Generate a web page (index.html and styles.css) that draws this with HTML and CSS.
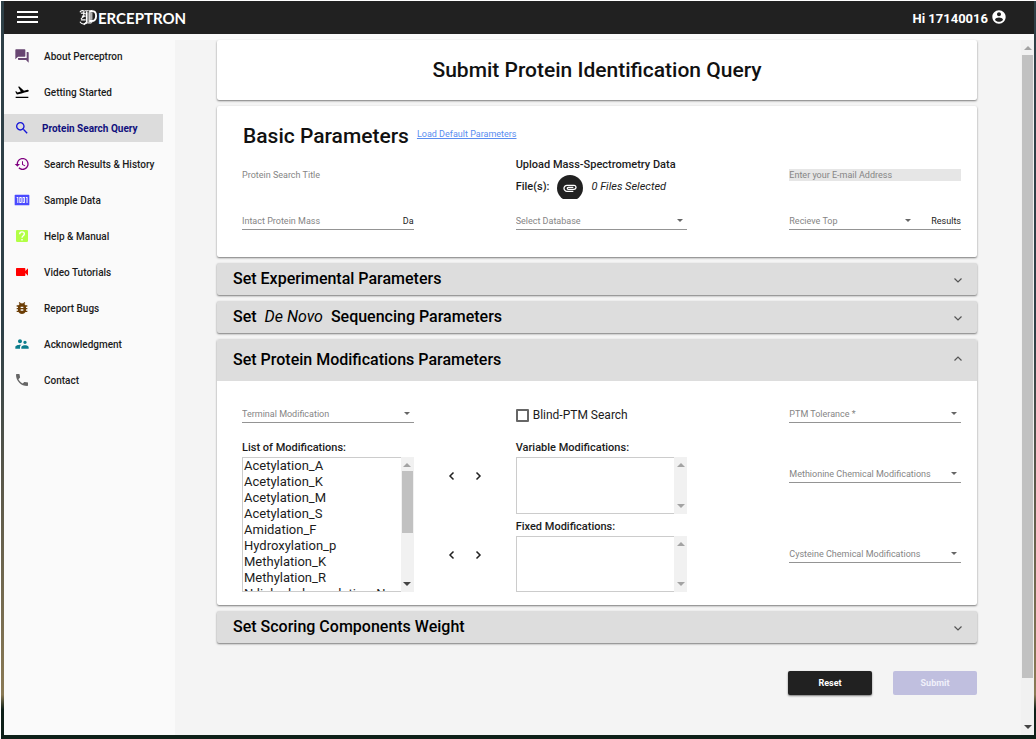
FILE: index.html
```html
<!DOCTYPE html>
<html lang="en">
<head>
<meta charset="utf-8">
<title>Perceptron</title>
<link rel="stylesheet" href="styles.css">
</head>
<body>
<div class="app">
  <header class="topbar">
    <button class="menu" aria-label="Menu"><span></span><span></span><span></span></button>
    <a class="brand" href="#" aria-label="Perceptron">
      <svg class="brand-mark" viewBox="0 0 20 17" aria-hidden="true">
        <g fill="none" stroke="currentColor">
          <path stroke-width="1.2" d="M1 3C2 1 4 1 6 2M2 4c2 0 4-1 5 1M1 13c2 3 5 3 7 1M2 11h5M3 7h4M5 2.500v5L2 10"/>
          <path stroke-width="1.5" d="M8 2v11.500L5 16M11.500 2v12"/>
          <path stroke-width="1" d="M9.500 3v11M6 1.500c3-1 5 1 8-.5"/>
          <path stroke-width="2" d="M11 2c6-1 7 1 7 5s-2 6-7 5"/>
          <path stroke-width="1" d="M13.500 3v8M7 14.500c3-1 5 1 7-1"/>
        </g>
      </svg>
      <span class="brand-name">ERCEPTRON</span>
    </a>
    <button class="user">Hi 17140016
      <svg viewBox="0 0 24 24" aria-hidden="true"><path d="M12 2C6.480 2 2 6.480 2 12s4.480 10 10 10 10-4.480 10-10S17.520 2 12 2zm0 3c1.660 0 3 1.340 3 3s-1.340 3-3 3-3-1.340-3-3 1.340-3 3-3zm0 14.200c-2.500 0-4.710-1.280-6-3.220.030-1.990 4-3.080 6-3.080 1.990 0 5.970 1.090 6 3.080-1.290 1.940-3.500 3.220-6 3.220z"/></svg>
    </button>
  </header>
  <div class="workspace">
    <nav class="sidebar">
      <a href="#" class="nav-item"><svg class="c-about" viewBox="0 0 24 24"><path d="M21 6h-2v9H6v2c0 .55.45 1 1 1h11l4 4V7c0-.55-.45-1-1-1zm-4 6V3c0-.55-.45-1-1-1H3c-.55 0-1 .45-1 1v14l4-4h10c.55 0 1-.45 1-1z"/></svg><span>About Perceptron</span></a>
      <a href="#" class="nav-item"><svg class="c-start" viewBox="0 0 24 24"><path d="M2.500 19h19v2h-19zm19.570-9.360c-.21-.8-1.040-1.280-1.840-1.060L14.920 10l-6.900-6.430-1.930.51 4.140 7.170-4.970 1.330-1.970-1.540-1.450.39 1.820 3.160.77 1.330 1.600-.43 5.310-1.420 4.350-1.160L21 11.490c.81-.23 1.280-1.050 1.070-1.850z"/></svg><span>Getting Started</span></a>
      <a href="#" class="nav-item active" aria-current="page"><svg class="c-search" viewBox="0 0 24 24"><path d="M15.500 14h-.79l-.28-.27C15.410 12.590 16 11.110 16 9.500 16 5.910 13.090 3 9.500 3S3 5.910 3 9.500 5.910 16 9.500 16c1.610 0 3.090-.59 4.230-1.570l.27.28v.79l5 4.990L20.490 19l-4.990-5zm-6 0C7.010 14 5 11.990 5 9.500S7.010 5 9.500 5 14 7.010 14 9.500 11.990 14 9.500 14z"/></svg><span>Protein Search Query</span></a>
      <a href="#" class="nav-item"><svg class="c-history" viewBox="0 0 24 24"><path d="M13 3c-4.970 0-9 4.030-9 9H1l3.890 3.890.07.14L9 12H6c0-3.870 3.130-7 7-7s7 3.130 7 7-3.130 7-7 7c-1.930 0-3.680-.79-4.940-2.060l-1.420 1.420C8.270 19.990 10.510 21 13 21c4.970 0 9-4.030 9-9s-4.030-9-9-9zm-1 5v5l4.280 2.540.72-1.210-3.500-2.080V8H12z"/></svg><span>Search Results &amp; History</span></a>
      <a href="#" class="nav-item"><svg class="c-sample" viewBox="0 0 24 24"><path fill-rule="evenodd" d="M2 4h20q1 0 1 1v14q0 1-1 1H2q-1 0-1-1V5q0-1 1-1zM4 7.500V9h1v7.500h1.500v-9zM8 7.500v9h3.500v-9zm1.300 1.500h.9v6h-.9zM12.800 7.500v9h3.500v-9zm1.300 1.500h.9v6h-.9zM17.800 7.500V9h1v7.500h1.500v-9z"/></svg><span>Sample Data</span></a>
      <a href="#" class="nav-item"><svg class="c-help" viewBox="0 0 24 24"><rect x="3" y="3" width="18" height="18" rx="2"/><path fill="none" stroke="#fff" stroke-width="2" d="M8.500 9.500C8.500 4.500 15.500 5 15.500 9c0 2.500-3.500 2.800-3.500 5.500M12 16.500v2.200"/></svg><span>Help &amp; Manual</span></a>
      <a href="#" class="nav-item"><svg class="c-video" viewBox="0 0 24 24"><path d="M17 10.500V7c0-.55-.45-1-1-1H4c-.55 0-1 .45-1 1v10c0 .55.45 1 1 1h12c.55 0 1-.45 1-1v-3.500l4 4v-11l-4 4z"/></svg><span>Video Tutorials</span></a>
      <a href="#" class="nav-item"><svg class="c-bug" viewBox="0 0 24 24"><path d="M20 8h-2.810c-.45-.78-1.070-1.450-1.820-1.960L17 4.410 15.590 3l-2.170 2.170C12.960 5.060 12.490 5 12 5c-.49 0-.96.06-1.410.17L8.410 3 7 4.410l1.620 1.630C7.880 6.550 7.260 7.220 6.810 8H4v2h2.090c-.05.33-.09.66-.09 1v1H4v2h2v1c0 .34.04.67.09 1H4v2h2.810c1.040 1.790 2.970 3 5.190 3s4.150-1.210 5.190-3H20v-2h-2.090c.05-.33.09-.66.09-1v-1h2v-2h-2v-1c0-.34-.04-.67-.09-1H20V8zm-6 8h-4v-2h4v2zm0-4h-4v-2h4v2z"/></svg><span>Report Bugs</span></a>
      <a href="#" class="nav-item"><svg class="c-ack" viewBox="0 0 24 24"><path d="M16.500 12c1.380 0 2.490-1.120 2.490-2.500S17.880 7 16.500 7C15.120 7 14 8.120 14 9.500s1.120 2.500 2.500 2.500zM9 11c1.660 0 2.990-1.340 2.990-3S10.660 5 9 5C7.340 5 6 6.340 6 8s1.340 3 3 3zm7.500 3c-1.830 0-5.500.92-5.500 2.750V19h11v-2.250c0-1.830-3.670-2.750-5.500-2.750zM9 13c-2.330 0-7 1.170-7 3.500V19h7v-2.250c0-.85.33-2.340 2.370-3.470C10.500 13.100 9.660 13 9 13z"/></svg><span>Acknowledgment</span></a>
      <a href="#" class="nav-item"><svg class="c-phone" viewBox="0 0 24 24"><path d="M6.620 10.790c1.440 2.830 3.760 5.140 6.590 6.590l2.200-2.200c.27-.27.67-.36 1.020-.24 1.120.37 2.330.57 3.570.57.55 0 1 .45 1 1V20c0 .55-.45 1-1 1-9.390 0-17-7.610-17-17 0-.55.45-1 1-1h3.500c.55 0 1 .45 1 1 0 1.250.2 2.450.57 3.570.11.35.03.74-.25 1.020l-2.200 2.200z"/></svg><span>Contact</span></a>
    </nav>

    <main class="content">
      <h1 class="card page-title">Submit Protein Identification Query</h1>

      <section class="card basic">
        <div class="basic-head"><h2>Basic Parameters</h2><a href="#">Load Default Parameters</a></div>
        <div class="columns basic-top">
          <input class="field plain" type="text" placeholder="Protein Search Title" aria-label="Protein Search Title">
          <div class="upload">
            <span>Upload Mass-Spectrometry Data</span>
            <div class="upload-files">
              <span>File(s):</span>
              <button class="attach" aria-label="Attach files"><svg viewBox="0 0 24 24"><path d="M2 12.500C2 9.460 4.460 7 7.500 7H18c2.210 0 4 1.790 4 4s-1.790 4-4 4H9.500C8.120 15 7 13.880 7 12.500S8.120 10 9.500 10H17v2H9.410c-.55 0-.55 1 0 1H18c1.100 0 2-.9 2-2s-.9-2-2-2H7.500C5.570 9 4 10.570 4 12.500S5.570 16 7.500 16H17v2H7.500C4.460 18 2 15.540 2 12.500z"/></svg></button>
              <em>0 Files Selected</em>
            </div>
          </div>
          <input class="field plain email" type="email" placeholder="Enter your E-mail Address" aria-label="E-mail Address">
        </div>
        <div class="columns">
          <div class="line"><input class="field" type="text" placeholder="Intact Protein Mass" aria-label="Intact Protein Mass"><span class="unit">Da</span></div>
          <div class="line"><select class="field" aria-label="Database"><option>Select Database</option></select></div>
          <div class="line"><select class="field" aria-label="Number of results"><option>Recieve Top</option></select><span class="unit far">Results</span></div>
        </div>
      </section>

      <button class="card panel-head" aria-expanded="false"><span>Set Experimental Parameters</span><svg viewBox="0 0 10 10"><path d="M1.500 4.500 5 8 8.500 4.500"/></svg></button>
      <button class="card panel-head" aria-expanded="false"><span>Set &nbsp;<i>De Novo</i>&nbsp; Sequencing Parameters</span><svg viewBox="0 0 10 10"><path d="M1.500 4.500 5 8 8.500 4.500"/></svg></button>

      <section class="card">
        <button class="panel-head open" aria-expanded="true"><span>Set Protein Modifications Parameters</span><svg viewBox="0 0 10 10"><path d="M1.500 5.500 5 2 8.500 5.500"/></svg></button>
        <div class="mods">
          <div class="columns">
            <div class="line"><select class="field" aria-label="Terminal Modification"><option>Terminal Modification</option></select></div>
            <label class="check"><input type="checkbox"><span>Blind-PTM Search</span></label>
            <div class="line"><select class="field" aria-label="PTM Tolerance"><option>PTM Tolerance *</option></select></div>
          </div>
          <div class="mods-body">
            <div class="listing">
              <label for="mods-all">List of Modifications:</label>
              <div class="listbox tall">
                <select id="mods-all" multiple>
                  <option>Acetylation_A</option><option>Acetylation_K</option><option>Acetylation_M</option><option>Acetylation_S</option><option>Amidation_F</option><option>Hydroxylation_p</option><option>Methylation_K</option><option>Methylation_R</option><option>N-linked-glycosylation_N</option>
                </select>
                <div class="scroll" aria-hidden="true"><i class="up"></i><b></b><i class="down dark"></i></div>
              </div>
            </div>
            <div class="movers">
              <div><button aria-label="Remove variable"><svg viewBox="0 0 10 10"><path d="M6.500 1.500 3 5l3.500 3.500"/></svg></button><button aria-label="Add variable"><svg viewBox="0 0 10 10"><path d="M3.500 1.500 7 5 3.500 8.500"/></svg></button></div>
              <div><button aria-label="Remove fixed"><svg viewBox="0 0 10 10"><path d="M6.500 1.500 3 5l3.500 3.500"/></svg></button><button aria-label="Add fixed"><svg viewBox="0 0 10 10"><path d="M3.500 1.500 7 5 3.500 8.500"/></svg></button></div>
            </div>
            <div class="listing">
              <label for="mods-var">Variable Modifications:</label>
              <div class="listbox"><select id="mods-var" multiple></select><div class="scroll" aria-hidden="true"><i class="up"></i><i class="down"></i></div></div>
              <label for="mods-fix">Fixed Modifications:</label>
              <div class="listbox"><select id="mods-fix" multiple></select><div class="scroll" aria-hidden="true"><i class="up"></i><i class="down"></i></div></div>
            </div>
            <div class="chemical">
              <div class="line"><select class="field" aria-label="Methionine Chemical Modifications"><option>Methionine Chemical Modifications</option></select></div>
              <div class="line"><select class="field" aria-label="Cysteine Chemical Modifications"><option>Cysteine Chemical Modifications</option></select></div>
            </div>
          </div>
        </div>
      </section>

      <button class="card panel-head" aria-expanded="false"><span>Set Scoring Components Weight</span><svg viewBox="0 0 10 10"><path d="M1.500 4.500 5 8 8.500 4.500"/></svg></button>

      <div class="actions"><button class="action">Reset</button><button class="action submit" disabled>Submit</button></div>
    </main>
    <div class="scroll page-scroll" aria-hidden="true"><i class="up"></i><b></b><i class="down dark"></i></div>
  </div>
</div>
</body>
</html>
```
FILE: styles.css
```css
* { box-sizing: border-box; }
body {
  margin: 0;
  height: 100vh;
  border-top: 1px solid #fff;
  border-left: 1px solid #fff;
  padding: 0 2px 4px 3px;
  background: linear-gradient(#2e4047 0 45%, #5a584a 65%, #8a7a55 94%, #0e2018 96%);
  font-family: Roboto, "Liberation Sans", sans-serif;
  color: #1c1c1c;
}
button, input, select { font-family: inherit; color: inherit; }
button { border: 0; padding: 0; background: none; }
h1, h2 { margin: 0; font-weight: 500; color: #111; }
svg { display: block; fill: currentColor; }

.app { height: 100%; display: flex; flex-direction: column; background: #fafafa; }
.topbar {
  flex: none;
  height: 33px;
  display: flex;
  align-items: center;
  padding: 0 27px 0 13px;
  background: #212121;
  color: #fff;
}
.menu { display: grid; gap: 3px; width: 21px; margin-right: 41px; padding-bottom: 2px; }
.menu span { height: 2px; background: #fff; }
.brand { display: flex; align-items: center; color: #fff; text-decoration: none; }
.brand-mark { width: 19px; height: 17px; }
.brand-name { font: 700 15px Lato, sans-serif; }
.user { margin-left: auto; display: flex; align-items: center; gap: 3px; font-size: 13px; font-weight: 700; line-height: 20px; padding-top: 3px; }
.user svg { width: 16px; height: 16px; margin-bottom: 4px; }

.workspace { flex: 1; min-height: 0; display: flex; }
.sidebar { flex: none; width: 171px; display: flex; flex-direction: column; gap: 8px; padding: 8px 12px 0 0; }
.nav-item {
  height: 28px;
  display: flex;
  align-items: center;
  gap: 14px;
  padding-left: 10px;
  color: #1c1c1c;
  font-size: 10px;
  font-weight: 500;
  text-decoration: none;
}
.nav-item svg { width: 16px; height: 16px; }
.active { gap: 12px; background: #dcdcdc; color: #10107c; font-weight: 700; }
.c-about { color: #684672; }
.c-start { color: #000; }
.c-search { color: #1515d8; }
.c-history { color: #800080; }
.c-sample { color: #4a4aff; }
.c-help { color: #b2ff45; }
.c-video { color: #f00; }
.c-bug { color: #6b3d05; }
.c-ack { color: #0b7d8c; }
.c-phone { color: #666; }

.content {
  flex: 1;
  display: flex;
  flex-direction: column;
  gap: 6px;
  margin-top: 6px;
  padding: 0 44px 0 42px;
  background: #f4f4f4;
}
.card { border-radius: 2px; background: #fff; box-shadow: 0 1px 2px rgba(0, 0, 0, .5); }
.page-title { height: 60px; display: grid; place-items: center; font-size: 21px; }

.basic { height: 151px; }
.basic-head { display: flex; align-items: center; gap: 8px; height: 47px; padding: 13px 0 0 26px; }
.basic-head h2 { font-size: 21px; }
.basic-head a { color: #5a8df0; font-size: 9px; line-height: 14px; padding-bottom: 5px; }
.columns { display: grid; grid-template-columns: repeat(3, 1fr); column-gap: 102px; padding: 0 16px 0 25px; }
.basic-top { height: 59px; }
.field {
  flex: 1;
  min-width: 0;
  width: 100%;
  height: 17px;
  border: 0;
  padding: 0;
  background: transparent;
  color: #858585;
  font-size: 9px;
  line-height: 16px;
}
.field::placeholder { color: #858585; opacity: 1; }
select.field { appearance: none; }
.line { display: flex; border-bottom: 1px solid #949494; }
.line:has(select)::after {
  content: "";
  order: 1;
  align-self: center;
  margin-right: 4px;
  border: 3px solid transparent;
  border-top-color: #666;
  border-bottom: 0;
}
.plain { margin-top: 13px; }
.email { height: 12px; margin-top: 16px; background: #e6e6e6; line-height: 12px; }
.unit { order: 2; font-size: 9px; line-height: 19px; height: 17px; }
.far { margin-left: 16px; }
.upload { font-size: 11px; font-weight: 500; line-height: 14px; padding-top: 5px; }
.upload-files { display: flex; align-items: center; height: 24px; margin-top: 3px; overflow: hidden; }
.upload-files em { font-weight: 400; }
.attach {
  align-self: flex-start;
  width: 26px;
  height: 26px;
  margin: 0 8px;
  border-radius: 50%;
  background: #212121;
  color: #fff;
  display: grid;
  place-items: center;
}
.attach svg { width: 16px; height: 16px; }

.panel-head {
  flex: none;
  height: 32px;
  width: 100%;
  display: flex;
  align-items: center;
  justify-content: space-between;
  padding: 0 14px 1px 16px;
  background: #ddd;
  color: #000;
  font-size: 16px;
  font-weight: 500;
  text-align: left;
}
.panel-head i { font-weight: 400; }
.panel-head svg { width: 10px; height: 10px; fill: none; stroke: #555; stroke-width: 1.2; }
.open { height: 42px; border-radius: 2px 2px 0 0; }

.mods { padding: 24px 0 13px; }
.check { display: flex; align-items: center; gap: 4px; padding-top: 2px; font-size: 12px; line-height: 16px; }
.check input {
  appearance: none;
  width: 13px;
  height: 13px;
  margin: 0;
  border: 2px solid #666;
  border-radius: 1px;
}
.mods-body {
  display: grid;
  grid-template-columns: 1fr 102px 1fr 102px 1fr;
  margin-top: 16px;
  padding: 0 16px 0 25px;
}
.listing { display: flex; flex-direction: column; }
.listing label { font-size: 11px; font-weight: 500; line-height: 18px; }
.listbox { display: flex; height: 57px; margin-bottom: 4px; }
.listbox:last-child { height: 56px; margin-bottom: 0; }
.listbox.tall { height: 135px; }
.listbox select {
  flex: 1;
  min-width: 0;
  border: 1px solid #ccc;
  border-right: 0;
  border-radius: 0;
  padding: 0;
  background: #fff;
  font-size: 13px;
  overflow: hidden;
  outline: 0;
}
.listbox option { padding: 0 1px 1px; }
.scroll { flex: none; width: 13px; display: flex; flex-direction: column; align-items: center; padding: 6px 0; background: #f1f1f1; }
.scroll b { width: 11px; height: 62px; margin-top: 4px; background: #c1c1c1; }
.up, .down { border: 4px solid transparent; }
.up { border-top: 0; border-bottom-color: #a3a3a3; }
.down { margin-top: auto; border-bottom: 0; border-top-color: #a3a3a3; }
.dark { border-top-color: #444; }
.movers { display: grid; align-content: start; row-gap: 69px; padding-top: 32px; }
.movers div { display: flex; justify-content: center; gap: 16px; }
.movers svg { width: 10px; height: 10px; fill: none; stroke: #222; stroke-width: 1.5; }
.chemical { grid-column: 5; display: grid; align-content: start; row-gap: 62px; padding-top: 26px; }

.actions { display: flex; justify-content: flex-end; gap: 21px; margin-top: 22px; }
.action {
  width: 84px;
  height: 24px;
  border-radius: 2px;
  background: #212121;
  color: #fff;
  font-size: 9px;
  font-weight: 700;
  box-shadow: 0 1px 2px rgba(0, 0, 0, .5);
}
.submit { background: #c0bfdf; color: #f0f0fa; box-shadow: none; }
.page-scroll { margin-top: 6px; }
.page-scroll b { flex: 0 1 623px; margin-top: 5px; }
```
